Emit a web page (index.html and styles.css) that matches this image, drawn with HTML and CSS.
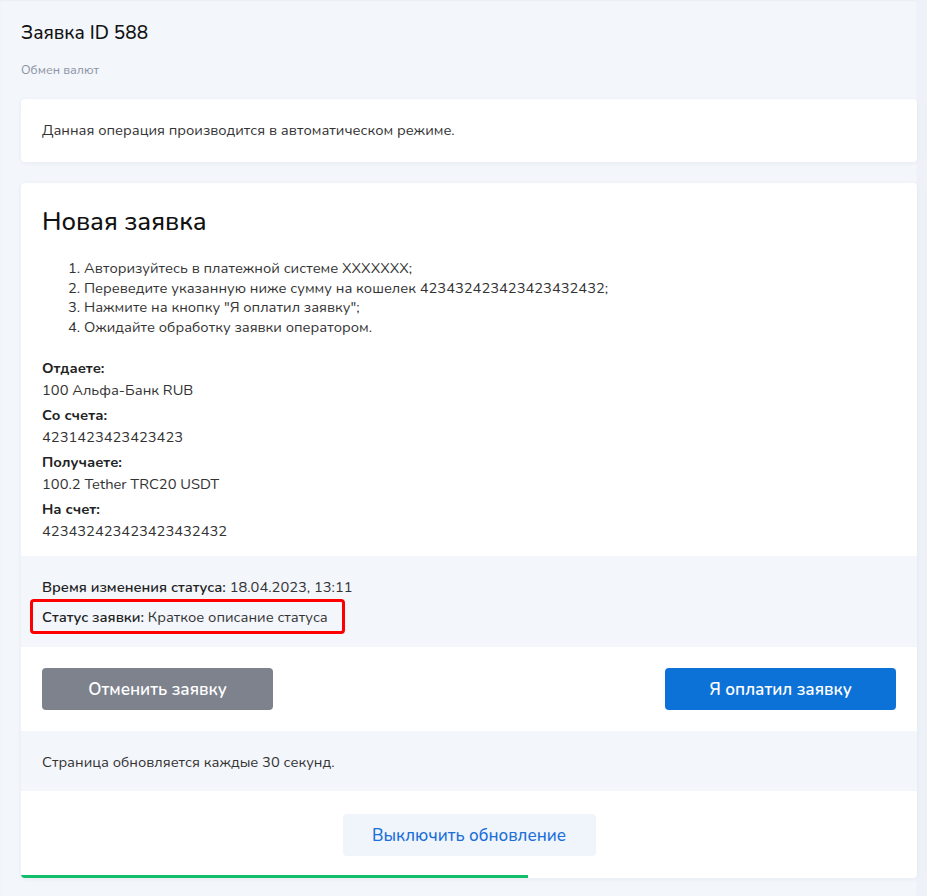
FILE: index.html
```html
<!DOCTYPE html>
<html lang="ru">
<head>
<meta charset="utf-8">
<title>Заявка ID 588</title>
<link rel="stylesheet" href="styles.css">
</head>
<body>
<div class="page">
  <header class="head">
    <h1 class="title">Заявка ID 588</h1>
    <div class="subtitle">Обмен валют</div>
  </header>

  <section class="card note">
    Данная операция производится в автоматическом режиме.
  </section>

  <section class="card order">
    <div class="order-main">
      <h2 class="order-title">Новая заявка</h2>
      <ol class="steps">
        <li>Авторизуйтесь в платежной системе XXXXXXX;</li>
        <li>Переведите указанную ниже сумму на кошелек 423432423423423432432;</li>
        <li>Нажмите на кнопку "Я оплатил заявку";</li>
        <li>Ожидайте обработку заявки оператором.</li>
      </ol>
      <dl class="details">
        <dt>Отдаете:</dt>
        <dd>100 Альфа-Банк RUB</dd>
        <dt>Со счета:</dt>
        <dd>4231423423423423</dd>
        <dt>Получаете:</dt>
        <dd>100.2 Tether TRC20 USDT</dd>
        <dt>На счет:</dt>
        <dd>423432423423423432432</dd>
      </dl>
    </div>

    <div class="status">
      <div class="status-row"><span class="lbl">Время изменения статуса:</span> 18.04.2023, 13:11</div>
      <div class="status-row highlight"><span class="lbl">Статус заявки:</span> Краткое описание статуса</div>
    </div>

    <div class="actions">
      <button class="btn btn-cancel">Отменить заявку</button>
      <button class="btn btn-pay">Я оплатил заявку</button>
    </div>

    <div class="refresh-info">Страница обновляется каждые 30 секунд.</div>

    <div class="refresh-actions">
      <button class="btn btn-light">Выключить обновление</button>
    </div>
    <div class="progress"><div class="progress-bar" style="width: 56.6%"></div></div>
  </section>
</div>
</body>
</html>
```
FILE: styles.css
```css
* { box-sizing: border-box; }
html, body { margin: 0; padding: 0; }
body {
  background: #eef2f8;
  font-family: "Nunito", "Lato", "Noto Sans", sans-serif;
  color: #222;
  font-size: 14.7px;
}
.page {
  width: 917px;
  min-height: 896px;
  background: #f3f6fb;
  padding: 20px 0 0 21px;
  box-shadow: inset 0 1px 2px rgba(0,0,0,0.04);
}
.head { padding: 0 0 21px; }
.title {
  margin: 0;
  font-size: 19px;
  font-weight: 500;
  color: #111;
  line-height: 26px;
}
.subtitle {
  margin-top: 16px;
  font-size: 12.5px;
  color: #8b94a5;
  line-height: 16px;
}
.card {
  background: #fff;
  border-radius: 4px;
  box-shadow: 0 1px 4px rgba(80, 100, 140, 0.08);
}
.note {
  height: 63px;
  padding: 22px 21px 0;
  line-height: 18px;
  color: #333;
}
.order {
  margin-top: 21px;
  overflow: hidden;
}
.order-main { padding: 24px 21px 10px; }
.order-title {
  margin: 0;
  font-size: 25.5px;
  font-weight: 500;
  color: #111;
  line-height: 30px;
}
.steps {
  margin: 22px 0 0;
  padding-left: 42px;
  line-height: 19.5px;
  color: #333;
}
.details { margin: 21px 0 0; }
.details dt {
  font-weight: 700;
  color: #222;
  line-height: 21px;
}
.details dd {
  margin: 0 0 4px;
  color: #333;
  line-height: 22px;
}
.status {
  background: #f3f6fb;
  padding: 21px 21px 13px;
  color: #333;
}
.status-row { line-height: 20px; }
.status .lbl { font-weight: 600; color: #222; }
.highlight {
  margin: 2px 0 0 -12px;
  width: 315px;
  padding: 4.5px 9px;
  border: 3px solid #ff0000;
  border-radius: 4px;
}
.actions {
  display: flex;
  justify-content: space-between;
  padding: 21px;
}
.btn {
  font-family: inherit;
  font-size: 17px;
  font-weight: 600;
  height: 42px;
  border: 0;
  border-radius: 4px;
  cursor: pointer;
}
.btn-cancel { width: 231px; background: #7e828d; color: #fff; }
.btn-pay { width: 231px; background: #0d72d8; color: #fff; }
.refresh-info {
  background: #f3f6fb;
  height: 60px;
  padding: 21px 21px 0;
  line-height: 20px;
  color: #333;
}
.refresh-actions {
  display: flex;
  justify-content: center;
  padding: 23px 0 19px;
}
.btn-light {
  width: 253px;
  background: #f0f4fb;
  color: #1a6fd8;
  font-weight: 500;
}
.progress { height: 3px; }
.progress-bar { height: 3px; background: #12bd6c; }
```
